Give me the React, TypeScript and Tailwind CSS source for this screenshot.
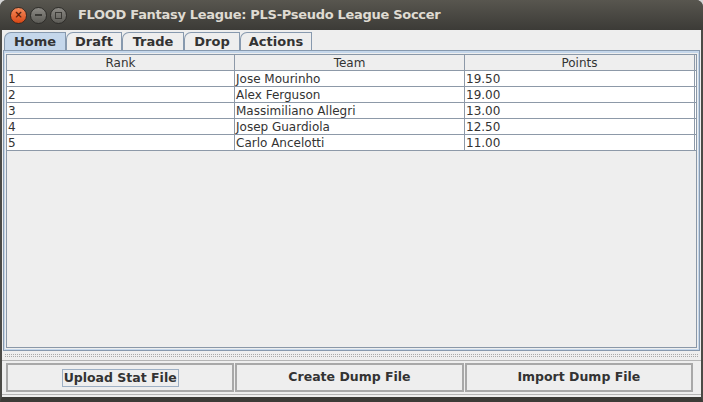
import React from "react";

const rows = [
  { rank: "1", team: "Jose Mourinho", points: "19.50" },
  { rank: "2", team: "Alex Ferguson", points: "19.00" },
  { rank: "3", team: "Massimiliano Allegri", points: "13.00" },
  { rank: "4", team: "Josep Guardiola", points: "12.50" },
  { rank: "5", team: "Carlo Ancelotti", points: "11.00" },
];

const tabs = [
  { label: "Home", w: "w-[62px]", active: true },
  { label: "Draft", w: "w-[56px]", active: false },
  { label: "Trade", w: "w-[62px]", active: false },
  { label: "Drop", w: "w-[56px]", active: false },
  { label: "Actions", w: "w-[72px]", active: false },
];

export default function App() {
  return (
    <div className="w-[703px] h-[402px] bg-[#d4d4d4] font-['DejaVu_Sans',sans-serif]">
      <div className="flex h-full flex-col overflow-hidden rounded-t-[7px] bg-[#3c3b37]">
        {/* Title bar */}
        <div className="flex h-[30px] shrink-0 items-center bg-gradient-to-b from-[#58564f] to-[#3c3b37] pl-[10px]">
          <div className="flex items-center gap-[3px]">
            <div className="flex h-[17px] w-[17px] items-center justify-center rounded-full border border-[#3a2a22] bg-gradient-to-b from-[#f58a5a] to-[#d9460f] text-[10px] font-bold leading-none text-[#5a1a05]">
              ×
            </div>
            <div className="flex h-[17px] w-[17px] items-center justify-center rounded-full border border-[#2e2d2a] bg-gradient-to-b from-[#8c8a85] to-[#5d5c57]">
              <div className="h-[2px] w-[7px] bg-[#3a3935]" />
            </div>
            <div className="flex h-[17px] w-[17px] items-center justify-center rounded-full border border-[#2e2d2a] bg-gradient-to-b from-[#8c8a85] to-[#5d5c57]">
              <div className="h-[7px] w-[7px] border border-[#3a3935]" />
            </div>
          </div>
          <span className="ml-[11px] text-[13px] font-bold tracking-[-0.3px] text-[#dfdbd2]">
            FLOOD Fantasy League: PLS-Pseudo League Soccer
          </span>
        </div>

        {/* Body */}
        <div className="flex flex-1 flex-col border-x-[2px] border-b-[5px] border-x-[#4b4a46] border-b-[#3c3b37] bg-[#eeeeee]">
          {/* Tabs */}
          <div className="flex h-[20px] items-end pl-[2px] pt-[2px]">
            {tabs.map((t) => (
              <div
                key={t.label}
                className={`${t.w} flex h-[18px] items-center justify-center rounded-tl-[7px] border border-b-0 border-[#8799ae] text-[13px] font-bold leading-none text-[#333333] ${
                  t.active ? "bg-[#c5d7eb]" : "bg-[#eeeeee]"
                }`}
              >
                {t.label}
              </div>
            ))}
          </div>

          {/* Tab content */}
          <div className="mx-[1px] flex flex-1 flex-col border border-[#8799ae] bg-[#eeeeee]">
            <div className="flex flex-1 flex-col border-x-[1px] border-t-[2px] border-b-[1px] border-[#c5d7eb] p-[1px]">
              <div className="flex-1 border border-[#8a98a8] bg-[#eeeeee]">
                <div className="text-[12px] leading-none text-[#333333]">
                  <div className="grid h-[16px] grid-cols-[228px_230px_230px] border-b border-[#8d99a8]">
                    <div className="flex items-center justify-center border-r border-[#8d99a8]">Rank</div>
                    <div className="flex items-center justify-center border-r border-[#8d99a8]">Team</div>
                    <div className="flex items-center justify-center border-r border-[#8d99a8]">Points</div>
                  </div>
                  {rows.map((r) => (
                    <div
                      key={r.rank}
                      className="grid h-[16px] grid-cols-[228px_230px_230px] border-b border-[#8d99a8] bg-white"
                    >
                      <div className="flex items-center border-r border-[#8d99a8] pl-[1px]">{r.rank}</div>
                      <div className="flex items-center border-r border-[#8d99a8] pl-[1px]">{r.team}</div>
                      <div className="flex items-center border-r border-[#8d99a8] pl-[1px]">{r.points}</div>
                    </div>
                  ))}
                </div>
              </div>
            </div>
          </div>

          {/* Split divider */}
          <div className="mx-[3px] mt-[3px] h-[3px] border-y border-dotted border-[#a9a9a9]" />

          {/* Buttons */}
          <div className="mt-[3px] grid grid-cols-3 gap-[1px] border-y border-[#b5b5b5] pl-[4px] pr-[8px] py-[2px]">
            <button className="flex h-[29px] items-center justify-center border-2 border-[#a8a8a8] bg-[#eeeeee] text-[12.5px] font-bold text-[#333333]">
              <span className="border border-[#9eb0c4] px-[1px] leading-[16px]">Upload Stat File</span>
            </button>
            <button className="flex h-[29px] items-center justify-center border-2 border-[#a8a8a8] bg-[#eeeeee] text-[12.5px] font-bold text-[#333333]">
              Create Dump File
            </button>
            <button className="flex h-[29px] items-center justify-center border-2 border-[#a8a8a8] bg-[#eeeeee] text-[12.5px] font-bold text-[#333333]">
              Import Dump File
            </button>
          </div>
          <div className="h-[2px]" />
        </div>
      </div>
    </div>
  );
}
